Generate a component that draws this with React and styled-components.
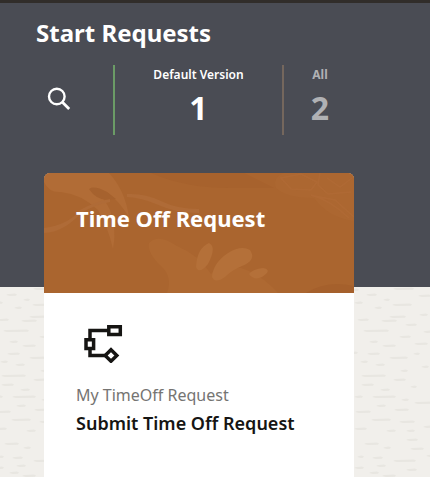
import React from "react";
import styled, { createGlobalStyle } from "styled-components";

const GlobalStyle = createGlobalStyle`
  * { box-sizing: border-box; }
  body {
    margin: 0;
    font-family: "Noto Sans", "Open Sans", sans-serif;
    color: #161513;
    background: #f1efeb;
  }
  h1, h2, p { margin: 0; }
  button {
    font: inherit;
    color: inherit;
    background: none;
    border: 0;
    padding: 0;
    cursor: pointer;
  }
`;

const Page = styled.div`
  position: relative;
  isolation: isolate;
  display: flex;
  flex-direction: column;
  min-height: 100vh;
  overflow: hidden;
`;

const Texture = styled.svg`
  position: absolute;
  inset: 287px 0 0;
  z-index: -1;
  width: 100%;
  height: 100%;
`;

const Hero = styled.header`
  height: 287px;
  padding: 14px 36px 0;
  border-top: 3px solid #312d2a;
  background: #4a4c54;
  color: #fff;
`;

const PageTitle = styled.h1`
  font-size: 24px;
  line-height: 32px;
  font-weight: 700;
`;

const FilterBar = styled.nav`
  display: flex;
  height: 70px;
  margin-top: 16px;
`;

const SearchButton = styled.button`
  display: flex;
  align-items: center;
  width: 77px;
  padding: 0 0 2px 11px;
`;

const FilterTab = styled.button`
  display: flex;
  flex-direction: column;
  align-items: center;
  width: ${(p) => (p.$active ? 169 : 74)}px;
  border-left: 2px solid ${(p) => (p.$active ? "#6b9b66" : "#75675d")};
  color: ${(p) => (p.$active ? "#fff" : "#b0b1b4")};
`;

const FilterLabel = styled.span`
  font-size: 12px;
  line-height: 20px;
  font-weight: ${(p) => (p.$strong ? 700 : 600)};
  white-space: nowrap;
`;

const FilterCount = styled.span`
  font-size: 32px;
  line-height: 46px;
  font-weight: 700;
`;

const Content = styled.main`
  display: flex;
  flex: 1;
  margin-top: -114px;
  padding: 0 44px;
`;

const Card = styled.article`
  display: flex;
  flex-direction: column;
  flex: 1;
  max-width: 310px;
  border-radius: 6px 6px 0 0;
  overflow: hidden;
  background: #fff;
`;

const CardHeader = styled.div`
  position: relative;
  height: 120px;
  padding: 30px 32px;
  background: #aa652f;
  color: #fff;
`;

const CardArt = styled.svg`
  position: absolute;
  inset: 0;
  width: 100%;
  height: 100%;
`;

const CardTitle = styled.h2`
  position: relative;
  font-size: 22px;
  line-height: 30px;
  font-weight: 700;
`;

const CardBody = styled.div`
  padding: 32px;
`;

const FlowIcon = styled.svg`
  display: block;
  margin: 0 0 18px 8px;
`;

const Caption = styled.p`
  font-size: 16px;
  line-height: 28px;
  color: #757472;
`;

const RequestName = styled.p`
  font-size: 18px;
  line-height: 28px;
  font-weight: 600;
`;

/* Flecks of the paper background: [x, y, length] */
const flecks = [
  [-9, 2, 7], [33, 1, 20], [6, 7, 10], [58, 8, 12], [23, 12, 6], [-6, 15, 8],
  [32, 17, 19], [14, 20, 7], [29, 29, 16], [59, 27, 8], [-3, 32, 11], [21, 33, 15],
  [45, 37, 11], [3, 43, 25], [63, 44, 8], [39, 49, 11], [9, 54, 8], [22, 58, 13],
  [54, 56, 13], [-10, 65, 7], [7, 66, 12], [53, 66, 6], [29, 70, 18], [0, 74, 7],
  [15, 77, 9], [61, 79, 7], [40, 83, 7], [1, 88, 24], [33, 92, 12], [1, 97, 12],
  [50, 99, 6], [20, 102, 9], [-6, 109, 8], [12, 109, 23], [41, 112, 7], [54, 115, 19],
  [16, 118, 9], [34, 122, 14], [-5, 124, 15], [11, 132, 19], [39, 134, 15],
  [63, 139, 8], [-6, 141, 12], [26, 143, 9], [46, 143, 8], [46, 152, 11],
  [4, 156, 14], [23, 160, 7], [50, 161, 13], [-3, 169, 6], [12, 170, 10],
  [66, 168, 8], [33, 173, 22], [16, 178, 9], [-6, 180, 9], [46, 182, 10],
  [9, 185, 9], [22, 188, 13],
];

function PaperTexture() {
  return (
    <Texture aria-hidden="true">
      <defs>
        <pattern id="flecks" width="120" height="192" patternUnits="userSpaceOnUse">
          {[0, 120].map((shift) =>
            flecks.map(([x, y, w]) => (
              <path
                key={`${shift}-${x}-${y}`}
                d={`M${x + shift} ${y + 1}l2-1 ${w - 3}-.5 2 1-1 1.2-${w - 4} .3z`}
                fill="#e8e6e1"
              />
            ))
          )}
        </pattern>
      </defs>
      <rect width="100%" height="100%" fill="url(#flecks)" />
    </Texture>
  );
}

function BotanicalArt() {
  return (
    <CardArt viewBox="0 0 310 120" preserveAspectRatio="xMidYMid slice" aria-hidden="true">
      <path d="M0 0h65q16 17 20 44-10-16-22-25l-15-4q12 9 18 22 7 18 3 39-5-22-15-39-17-16-37-18Q5 20 0 9z" fill="#b16c36" />
      <path d="M45 16q5-4 18 3l9 7-8 1q-12 0-19-11z" fill="#a6622e" />
      <path d="M0 55q24-3 36-18 14-8 30-11v3q-16 3-29 11Q20 59 0 60zM83 21q18-1 34 7 16 8 38 8v4q-24 0-43-9-14-6-29-7z" fill="#af6b37" />
      <path d="M107 0h93l30 15h-45q-44 0-78-15z" fill="#a7622d" />
      <path d="M240 0h70v48q-25-3-40-23-28 0-38-10-4-10 8-15z" fill="#ac6731" />
      <path d="M105 70q9-10 28 3 22 9 34 28 11-14 26-7 22 5 41 26H123q6-16-6-27-14-13-12-23z" fill="#ae6932" />
      <path d="M152 94q1-19 13-24 8 4-1 21-9 11-12 3zM168 104q1-14 16-24 13-8 22-3 7 10-8 16-10 4-17 11-10 7-13 0zM205 101q4-5 14-6 10 2-1 9-8 4-13-3z" fill="#b47039" />
      <g fill="none" stroke="#b06b36" strokeWidth="1.5" opacity=".7">
        <path d="M237 5l10 11 20 1 6-8-16-8zM276 0l-2 12 10 9 23-2M283 5l13 9 12-9M267 22q19 5 38 23M271 23l20 4 19 17" />
      </g>
      <path d="M262 120q21-13 48-7v7z" fill="#a5602c" />
    </CardArt>
  );
}

export default function App() {
  return (
    <>
      <GlobalStyle />
      <Page>
        <PaperTexture />
        <Hero>
          <PageTitle>Start Requests</PageTitle>
          <FilterBar aria-label="Request filters">
            <SearchButton type="button" aria-label="Search">
              <svg width="25" height="24" viewBox="0 0 25 24" fill="none" stroke="#fff" strokeWidth="2.4" aria-hidden="true">
                <circle cx="9.8" cy="9.5" r="7.8" />
                <path d="M15.2 15l7 7" strokeWidth="2.8" />
              </svg>
            </SearchButton>
            <FilterTab type="button" $active aria-pressed="true">
              <FilterLabel>Default Version</FilterLabel>
              <FilterCount>1</FilterCount>
            </FilterTab>
            <FilterTab type="button" aria-pressed="false">
              <FilterLabel $strong>All</FilterLabel>
              <FilterCount>2</FilterCount>
            </FilterTab>
          </FilterBar>
        </Hero>
        <Content>
          <Card>
            <CardHeader>
              <BotanicalArt />
              <CardTitle>Time Off Request</CardTitle>
            </CardHeader>
            <CardBody>
              <FlowIcon width="40" height="38" viewBox="0 0 40 38" fill="none" stroke="#161513" strokeWidth="3.5" aria-hidden="true">
                <path d="M25 5.5H6V14M6 24v6.5H21" />
                <path d="M24.8 1.8h11.5v7.6H24.8zM2 14.8h7.6v8.6H2z" />
                <path d="M27 24.8l5.8 5.7-5.8 5.7-5.8-5.7z" />
              </FlowIcon>
              <Caption>My TimeOff Request</Caption>
              <RequestName>Submit Time Off Request</RequestName>
            </CardBody>
          </Card>
        </Content>
      </Page>
    </>
  );
}
